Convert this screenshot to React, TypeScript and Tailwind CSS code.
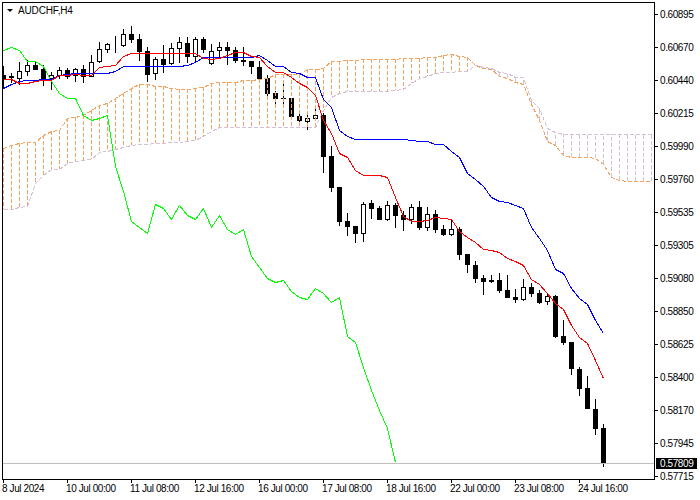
const priceLabels = [
  "0.60895", "0.60670", "0.60440", "0.60215", "0.59990",
  "0.59760", "0.59535", "0.59305", "0.59080", "0.58850",
  "0.58625", "0.58400", "0.58170", "0.57945", "0.57715",
];

const timeLabels = [
  "8 Jul 2024", "10 Jul 00:00", "11 Jul 08:00", "12 Jul 16:00", "16 Jul 00:00",
  "17 Jul 08:00", "18 Jul 16:00", "22 Jul 00:00", "23 Jul 08:00", "24 Jul 16:00",
];

// high, low, body top, body bottom, hollow
const candles: [number, number, number, number, number][] = [
  [66, 89, 75, 80, 0], [73, 83, 76, 78, 0], [62, 85, 71, 79, 1], [60, 76, 65, 72, 1],
  [61, 70, 65, 70, 0], [65, 86, 69, 79, 0], [72, 90, 75, 79, 1], [67, 79, 70, 76, 1],
  [68, 79, 70, 77, 0], [68, 82, 69, 76, 1], [65, 83, 69, 77, 0], [55, 77, 62, 77, 1],
  [42, 63, 49, 62, 1], [43, 53, 44, 50, 1], [36, 53, 45, 45, 1], [29, 47, 34, 46, 1],
  [26, 43, 34, 40, 0], [34, 61, 39, 52, 0], [47, 82, 51, 75, 0], [57, 80, 59, 74, 1],
  [45, 73, 59, 65, 0], [43, 65, 48, 64, 1], [37, 63, 42, 49, 1], [37, 63, 43, 57, 0],
  [37, 62, 39, 57, 1], [37, 53, 39, 50, 0], [44, 65, 51, 64, 1], [42, 57, 47, 51, 1],
  [42, 65, 47, 51, 0], [47, 63, 50, 61, 0], [47, 66, 60, 62, 0], [61, 74, 61, 67, 0],
  [61, 79, 67, 79, 0], [75, 98, 78, 94, 0], [91, 105, 93, 99, 0], [83, 105, 98, 99, 0],
  [98, 119, 98, 117, 0], [113, 125, 116, 121, 0], [114, 130, 118, 122, 1], [108, 121, 115, 119, 1],
  [113, 173, 115, 157, 0], [146, 192, 156, 188, 0], [187, 226, 187, 222, 0], [213, 236, 221, 227, 0],
  [226, 243, 226, 234, 0], [202, 242, 204, 234, 1], [200, 219, 203, 209, 0], [206, 220, 208, 220, 0],
  [201, 221, 205, 220, 1], [203, 228, 205, 216, 0], [211, 231, 215, 220, 0], [204, 224, 207, 220, 1],
  [201, 230, 207, 228, 0], [207, 231, 214, 228, 1], [210, 233, 214, 230, 0], [225, 236, 229, 235, 0],
  [219, 236, 229, 235, 1], [227, 260, 229, 255, 0], [254, 273, 254, 265, 0], [261, 283, 265, 279, 0],
  [275, 295, 278, 282, 0], [275, 283, 280, 282, 0], [273, 293, 280, 291, 0], [275, 298, 290, 298, 0],
  [289, 303, 297, 300, 0], [279, 301, 287, 300, 1], [283, 297, 287, 294, 0], [290, 304, 293, 303, 0],
  [293, 305, 296, 302, 1], [295, 338, 296, 337, 0], [320, 345, 336, 343, 0], [342, 375, 342, 369, 0],
  [367, 396, 369, 389, 0], [376, 409, 388, 409, 0], [399, 435, 409, 429, 0], [424, 467, 428, 464, 0],
];

const kijun = [
  88, 84, 81, 80, 80, 79, 79, 75, 74, 73, 73, 73, 73, 73, 71, 66, 66, 66, 66, 66, 66, 66, 66, 65, 62, 57, 57, 57, 57,
  57, 57, 57, 55, 60, 66, 66, 72, 73, 77, 77, 99, 107, 130, 136, 139, 139, 139, 139, 139, 139, 139, 140, 141, 141,
  144, 144, 151, 157, 173, 179, 186, 197, 201, 202, 205, 208, 227, 238, 250, 269, 273, 288, 298, 304, 320, 333,
];

const tenkan = [
  79, 79, 83, 83, 81, 80, 80, 75, 75, 74, 75, 75, 67, 66, 65, 56, 53, 53, 53, 53, 53, 53, 53, 53, 53, 58, 59, 58, 55,
  52, 52, 56, 57, 66, 72, 72, 77, 83, 87, 95, 120, 133, 153, 157, 170, 175, 175, 175, 177, 197, 216, 221, 221, 220,
  217, 218, 219, 231, 237, 242, 249, 250, 252, 258, 261, 265, 279, 284, 293, 303, 309, 325, 337, 343, 360, 378,
];

const chikou = [
  50, 47, 50, 61, 61, 66, 81, 93, 98, 98, 115, 120, 118, 115, 166, 191, 221, 227, 233, 204, 208, 219, 205, 215, 219,
  208, 227, 215, 229, 234, 229, 256, 267, 278, 282, 280, 291, 297, 299, 288, 293, 302, 297, 336, 342, 367, 390, 410,
  428, 462,
];

const spanA = [
  148, 145, 143, 142, 142, 135, 131, 130, 118, 117, 115, 110, 105, 103, 98, 93, 88, 84, 84, 86, 86, 88, 89, 89, 88, 87,
  83, 82, 82, 82, 80, 80, 79, 78, 74, 74, 74, 74, 69, 69, 68, 61, 61, 60, 60, 59, 59, 59, 59, 59, 58, 58, 58, 57, 57,
  55, 54, 56, 57, 65, 68, 69, 76, 78, 82, 84, 104, 120, 141, 145, 155, 157, 157, 157, 158, 164, 177, 180, 181, 181, 181,
  181,
];

const spanB = [
  209, 209, 207, 206, 183, 175, 169, 169, 163, 161, 160, 159, 152, 151, 149, 147, 145, 144, 144, 143, 143, 142, 142, 141,
  140, 136, 131, 127, 127, 127, 127, 127, 127, 127, 127, 127, 127, 127, 127, 127, 110, 97, 93, 91, 91, 91, 91, 91, 91,
  90, 89, 83, 78, 76, 73, 72, 72, 71, 71, 65, 67, 68, 72, 73, 77, 77, 100, 108, 128, 132, 134, 134, 134, 134, 134, 134,
  134, 134, 134, 134, 134, 134,
];

const xAt = (i: number) => 3 + 8 * i;
const points = (ys: number[]) => ys.map((y, i) => `${xAt(i) + 0.5},${y + 0.5}`).join(" ");

const Chart = () => (
  <svg width={651} height={476} viewBox="3 3 651 476" shapeRendering="crispEdges" className="block">
    {candles.map(([high, low, top, bottom, hollow], i) => {
      const x = xAt(i);
      return (
        <g key={i}>
          <rect x={x} y={high} width={1} height={low - high} fill="#000" />
          {hollow ? (
            <rect x={x - 1.5} y={top + 0.5} width={4} height={Math.max(bottom - top - 1, 0)} fill="#fff" stroke="#000" />
          ) : (
            <rect x={x - 2} y={top} width={5} height={Math.max(bottom - top, 1)} fill="#000" />
          )}
        </g>
      );
    })}

    {/* cloud hatching */}
    {spanA.map((a, i) => (
      <line
        key={i}
        x1={xAt(i) + 0.5}
        x2={xAt(i) + 0.5}
        y1={a}
        y2={spanB[i]}
        stroke={a < spanB[i] ? "#F4A460" : "#D8BFD8"}
        strokeDasharray="4 2"
      />
    ))}
    <polyline points={points(spanB)} fill="none" stroke="#D8BFD8" strokeDasharray="4 2" />
    <polyline points={points(spanA)} fill="none" stroke="#F4A460" strokeDasharray="4 2" />

    <polyline points={points(chikou)} fill="none" stroke="#00FF00" />
    <polyline points={points(kijun)} fill="none" stroke="#0000FF" />
    <polyline points={points(tenkan)} fill="none" stroke="#FF0000" />

    {/* last price line */}
    <rect x={3} y={463} width={651} height={1} fill="#C0C0C0" />
  </svg>
);

export default function App() {
  return (
    <div className="w-[700px] h-[500px] bg-white overflow-hidden pt-[2px] pl-[2px] text-black text-[10px] leading-[11px] tracking-[-0.4px] font-['Liberation_Sans',Arial,sans-serif]">
      <div className="flex h-[478px]">
        <div className="relative w-[653px] h-[478px] border border-black">
          <Chart />
          <div className="absolute left-[4px] top-[2px] flex items-center gap-[5px] tracking-[-0.15px]">
            <svg width={6} height={3} viewBox="0 0 6 3" className="block">
              <path d="M0 0H6L3 3Z" fill="#000" />
            </svg>
            <span>AUDCHF,H4</span>
          </div>
        </div>

        {/* price axis */}
        <div className="relative w-[45px] flex flex-col gap-[22px] pt-[7px]">
          {priceLabels.map((label) => (
            <div key={label} className="flex items-center h-[11px] shrink-0">
              <div className="w-[3px] h-px bg-black" />
              <span className="ml-[2px]">{label}</span>
            </div>
          ))}
          <div className="absolute left-px top-[456px] w-[41px] h-[11px] bg-black text-white pl-[4px]">0.57809</div>
        </div>
      </div>

      {/* time axis */}
      <div className="flex">
        {timeLabels.map((label) => (
          <div key={label} className="w-[64px] shrink-0">
            <div className="ml-px w-px h-[3px] bg-black" />
            <div className="whitespace-nowrap">{label}</div>
          </div>
        ))}
      </div>
    </div>
  );
}
